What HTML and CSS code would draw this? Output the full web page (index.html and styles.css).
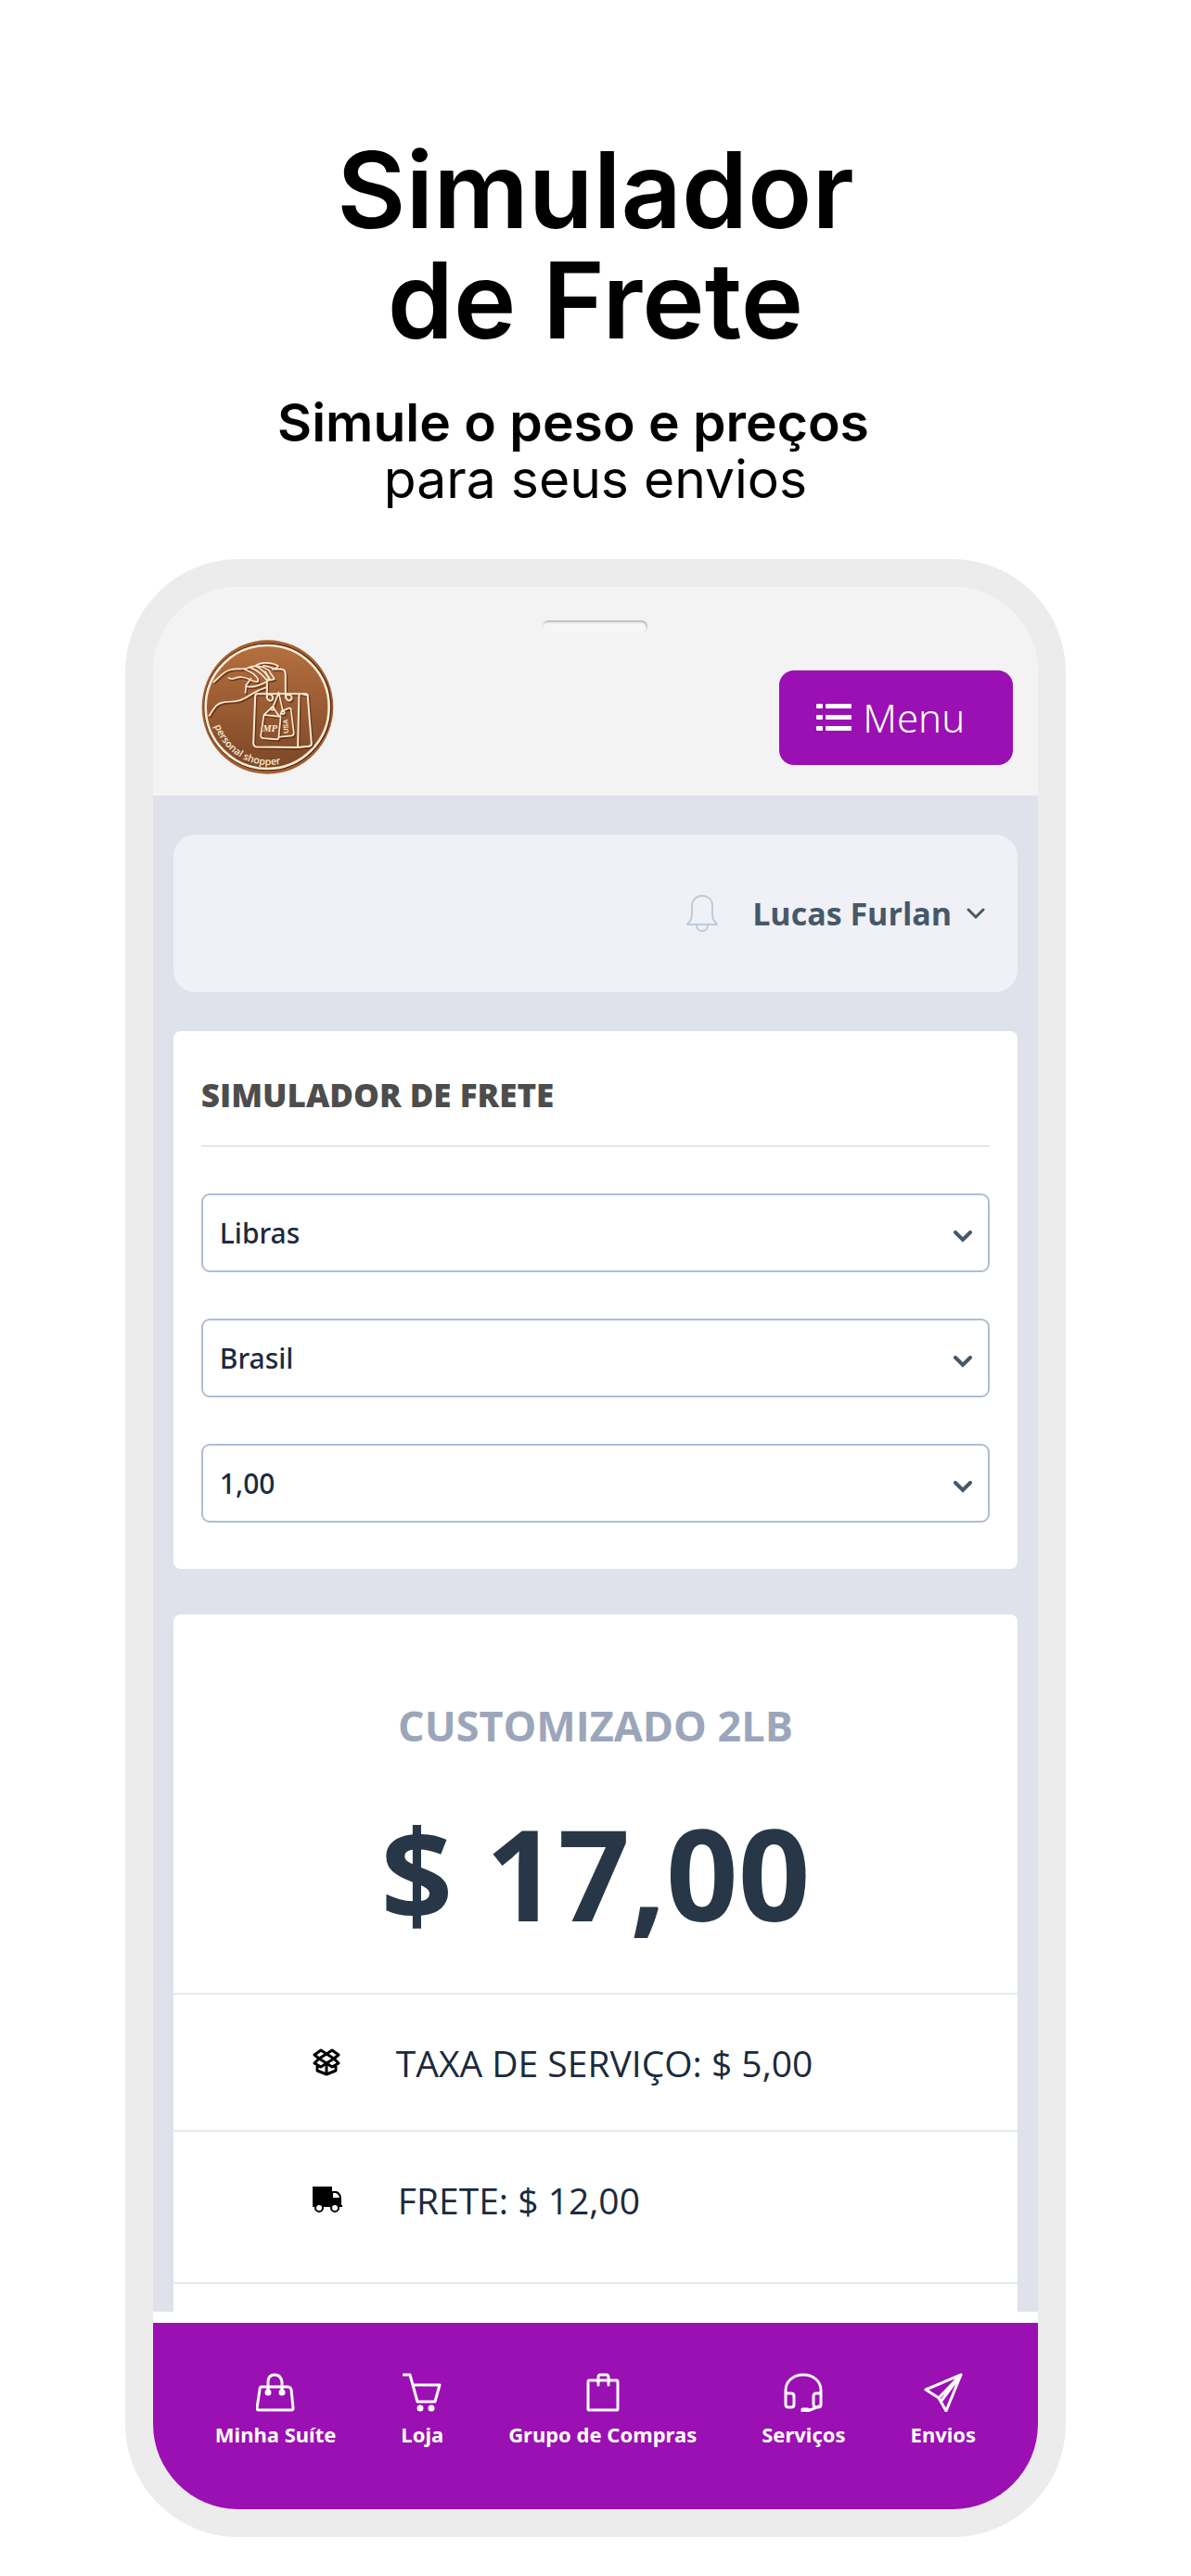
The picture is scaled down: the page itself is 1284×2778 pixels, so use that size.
FILE: index.html
```
<!doctype html>
<html lang="pt-br">
<head>
<title>Simulador de Frete</title>
<meta charset="UTF-8">
<meta name="viewport" content="width=device-width, initial-scale=1">
<link rel="stylesheet" href="styles.css">
</head>
<body>
<header class="intro">
    <h1>Simulador<br>de Frete</h1>
    <p><strong>Simule o peso e preços</strong>para seus envios</p>
</header>

<div class="phone">
    <div class="topbar">
        <div class="speaker"></div>
        <div class="brand">
            <a href="#" class="logo" aria-label="Personal shopper">
                <svg viewBox="52 59 428 436">
                    <defs>
                        <linearGradient id="copper" x1="0" y1="0" x2="0" y2="1">
                            <stop offset="0" stop-color="#b4703f"/>
                            <stop offset="0.5" stop-color="#9a5c34"/>
                            <stop offset="1" stop-color="#7b4726"/>
                        </linearGradient>
                        <path id="arc" d="M94 338 A187 187 0 0 0 340 452"/>
                        <g id="drawing">
                            <path d="M91 196C112 178 124 160 145 156C170 150 190 158 207 148C230 140 252 146 270 158L288 186L276 190L258 162"/>
                            <path d="M207 148C240 158 250 176 264 190L272 190C266 172 246 154 228 144"/>
                            <path d="M228 142C246 128 286 134 300 144L292 154C278 150 268 144 252 143"/>
                            <path d="M140 182C152 194 160 176 184 180C212 184 218 198 234 194C240 188 226 170 202 160L190 154"/>
                            <path d="M212 184L196 206L194 230M198 210C222 216 242 204 262 196M262 213C218 226 212 240 188 250C160 268 120 250 98 274C88 286 84 294 77 305"/>
                            <path stroke-width="6" d="M264 188V238C262 254 276 262 282 252C286 242 278 236 270 236M282 154H302C318 152 324 160 324 172V238C324 254 338 262 344 250C346 240 338 236 330 238"/>
                            <path stroke-width="6" d="M232 234H388Q396 234 396 240L408 392Q410 402 400 404L364 408L230 406Q220 404 220 394L226 242Q226 234 232 234ZM368 236L364 408M382 236L392 238"/>
                            <path d="M282 276L254 302L244 370Q244 376 252 378L296 382Q302 382 302 374L308 312L282 276ZM254 302L308 308M302 230L282 280M302 230L316 292M308 302L312 290L336 280Q342 280 342 286L351 360Q352 368 344 370L304 374"/>
                            <circle cx="282" cy="282" r="5"/><circle cx="316" cy="295" r="5"/>
                        </g>
                    </defs>
                    <ellipse cx="266" cy="277" rx="213" ry="217" fill="#a4602f"/>
                    <circle cx="266" cy="277" r="203" fill="url(#copper)" stroke="#4b240f" stroke-width="8"/>
                    <circle cx="265" cy="277" r="200" fill="none" stroke="#fbe9d3" stroke-width="8"/>
                    <use href="#drawing" x="4" y="5" class="logo-shade"/>
                    <use href="#drawing" class="logo-line"/>
                    <text class="logo-mp" x="250" y="357">MP</text>
                    <text class="logo-usa" transform="translate(334 362) rotate(-94)">USA</text>
                    <text class="logo-name"><textPath href="#arc">personal shopper</textPath></text>
                </svg>
            </a>
            <button type="button" class="menu">
                <svg width="38" height="29" viewBox="0 0 38 29" fill="currentColor"><rect width="7" height="5" rx="1"/><rect x="10" width="28" height="5" rx="1"/><rect y="12" width="7" height="5" rx="1"/><rect x="10" y="12" width="28" height="5" rx="1"/><rect y="24" width="7" height="5" rx="1"/><rect x="10" y="24" width="28" height="5" rx="1"/></svg>
                Menu
            </button>
        </div>
    </div>

    <main>
        <div class="user">
            <button type="button" aria-label="Notificações">
                <svg width="36" height="42" viewBox="0 0 36 42" fill="none" stroke="#bfcbd9" stroke-width="2" stroke-linejoin="round"><path d="M2 33C6 28 7 27 7 21V13C7 6 12 2 18 2S29 6 29 13V21C29 27 30 28 34 33ZM12 34C12 38 15 40 18 40S24 38 24 34"/></svg>
            </button>
            <button type="button" class="name">
                Lucas Furlan
                <svg width="20" height="13" viewBox="0 0 20 13" fill="none" stroke="currentColor" stroke-width="3" stroke-linecap="round"><path d="M2 2L10 10L18 2"/></svg>
            </button>
        </div>

        <form class="card simulator">
            <h2>SIMULADOR DE FRETE</h2>
            <div class="field">
                <select aria-label="Unidade de peso"><option>Libras</option></select>
                <svg width="20" height="13" viewBox="0 0 20 13"><path d="M2 2L10 10L18 2"/></svg>
            </div>
            <div class="field">
                <select aria-label="País"><option>Brasil</option></select>
                <svg width="20" height="13" viewBox="0 0 20 13"><path d="M2 2L10 10L18 2"/></svg>
            </div>
            <div class="field">
                <select aria-label="Peso"><option>1,00</option></select>
                <svg width="20" height="13" viewBox="0 0 20 13"><path d="M2 2L10 10L18 2"/></svg>
            </div>
        </form>

        <section class="card result">
            <h3>CUSTOMIZADO 2LB</h3>
            <div class="price">$ 17,00</div>
            <ul>
                <li>
                    <svg width="30" height="30" viewBox="0 0 30 30" fill="none" stroke="#000" stroke-width="3" stroke-linejoin="round"><path d="M9 2L2 7L7 11L15 6ZM21 2L28 7L23 11L15 6ZM7 11L2 16L9 20L15 16ZM23 11L28 16L21 20L15 16ZM7 11L15 16L23 11M5 19V24L15 28L25 24V19M15 17V28"/></svg>
                    TAXA DE SERVIÇO: $ 5,00
                </li>
                <li class="frete">
                    <svg width="32" height="28" viewBox="0 0 32 28"><path d="M0 0H21V5H26Q31 7 31 13V20H32V22H0Z"/><path fill="#fff" d="M22 7H25Q28 8 29 12H22Z"/><circle cx="7" cy="23" r="4" fill="#fff" stroke="#000" stroke-width="2"/><circle cx="24" cy="23" r="4" fill="#fff" stroke="#000" stroke-width="2"/></svg>
                    FRETE: $ 12,00
                </li>
            </ul>
        </section>
    </main>

    <nav>
        <a href="#">
            <svg viewBox="0 0 42 42"><path d="M6 15H34Q37 15 38 18L40 38Q40 40 38 40H3Q1 40 1 38L4 18Q4 15 6 15ZM13 20V10Q13 2 20 2T28 10V20"/><circle cx="13" cy="21" r="2"/><circle cx="28" cy="21" r="2"/></svg>
            Minha Suíte
        </a>
        <a href="#">
            <svg viewBox="0 0 42 42"><path d="M1 2H8L16 31H35L40 13H12"/><circle cx="19" cy="38" r="2"/><circle cx="31" cy="38" r="2"/></svg>
            Loja
        </a>
        <a href="#">
            <svg viewBox="0 0 42 42"><path d="M6 8H36Q37 8 37 10V39Q37 40 36 40H6Q5 40 5 39V10Q5 8 6 8ZM16 13V5Q16 2 18 2H25Q27 2 27 5V13"/></svg>
            Grupo de Compras
        </a>
        <a href="#">
            <svg viewBox="0 0 42 42"><path d="M2 24V19C2 9 10 2 21 2S40 9 40 19V24M3 22H8Q11 22 11 25V34Q11 37 8 37H5Q2 37 2 34V23ZM40 23V34Q40 37 37 37H35Q32 37 32 34V25Q32 22 35 22H39M38 36L26 41H20V39H26"/></svg>
            Serviços
        </a>
        <a href="#">
            <svg viewBox="0 0 42 42"><path d="M40 2L2 18L16 27L24 41ZM40 2L16 27M36 7L19 30"/></svg>
            Envios
        </a>
    </nav>
</div>
</body>
</html>
```
FILE: styles.css
```
*{box-sizing:border-box;}
body,h1,h2,h3,p,ul{margin:0;padding:0;}
body{background:#fff;color:#1b2b3c;font-family:"Open Sans","Noto Sans",sans-serif;padding:145px 0 42px;}
button,select{font:inherit;color:inherit;background:none;border:0;padding:0;margin:0;cursor:pointer;}
svg{display:block;flex:none;}
a{color:inherit;text-decoration:none;}

/* titulo */
.intro{text-align:center;color:#000;font-family:Inter,"Open Sans",sans-serif;margin-bottom:56px;}
.intro h1{font-size:114px;line-height:119px;font-weight:600;}
.intro p{font-size:57px;line-height:61px;margin-top:42px;}
.intro strong{display:block;font-weight:600;padding-right:48px;}

/* aparelho */
.phone{width:79%;margin:0 auto;border:30px solid #ececec;border-radius:122px;overflow:hidden;background:#fff;}
.topbar{height:225px;background:#f3f3f3;padding-top:36px;}
.speaker{width:113px;height:13px;margin:0 auto;border-radius:6px;background:#f6f6f6;box-shadow:inset -1px 2px 2px #b9bdc0;}
.brand{display:flex;justify-content:space-between;align-items:center;padding:8px 27px 0 52px;}
.logo svg{width:143px;height:145px;}
.logo-shade,.logo-line{fill:none;stroke-width:5;stroke-linecap:round;stroke-linejoin:round;}
.logo-shade{stroke:#54290f;opacity:.7;}
.logo-line{stroke:#fbe9d3;}
.logo-mp,.logo-usa,.logo-name{fill:#fbe9d3;}
.logo-mp{font:italic bold 32px "Liberation Serif",serif;}
.logo-usa{font:bold 22px "Liberation Sans",sans-serif;}
.logo-name{font:600 32px "Open Sans",sans-serif;}
.menu{display:flex;align-items:center;gap:12px;height:102px;padding:0 52px 0 40px;border-radius:16px;background:#9a10b3;color:#fff;font-family:"Noto Sans",sans-serif;font-size:42px;font-weight:300;margin-top:22px;}

main{background:#dfe2ea;padding:42px 22px 0;}
.user{display:flex;justify-content:flex-end;align-items:center;gap:36px;height:170px;padding-right:35px;border-radius:24px;background:#eff1f7;}
.name{display:flex;align-items:center;gap:16px;font-size:34px;font-weight:700;color:#475869;}
.card{background:#fff;border-radius:8px;}
.simulator{margin-top:42px;padding:44px 30px 50px;}
.simulator h2{font-size:35px;line-height:50px;font-weight:800;color:#4d4d4d;padding-bottom:29px;border-bottom:2px solid #e2e8ef;}
.field{position:relative;margin-top:50px;}
.field select{display:block;width:100%;height:85px;padding:0 18px;border:2px solid #b0bdd2;border-radius:9px;appearance:none;font-family:"Noto Sans",sans-serif;font-size:30px;font-weight:500;}
.field svg{position:absolute;right:19px;top:40px;fill:none;stroke:#475869;stroke-width:4;stroke-linecap:round;pointer-events:none;}

.result{margin-top:49px;padding-top:90px;border-radius:8px 8px 0 0;text-align:center;}
.result h3{font-size:45px;line-height:60px;font-weight:700;color:#9ba6ba;}
.price{font-size:136px;line-height:160px;font-weight:700;color:#273747;margin:49px 0;}
.result ul{list-style:none;padding-bottom:30px;}
.result li{display:flex;align-items:center;gap:60px;height:148px;padding-left:150px;border-top:2px solid #e5eaf0;font-size:39px;}
.result li.frete{height:166px;padding-bottom:16px;border-bottom:2px solid #e5eaf0;}

nav{display:flex;justify-content:center;gap:70px;height:201px;margin-top:12px;padding-top:54px;background:#9a10b3;color:#fff;font-family:"Noto Sans",sans-serif;font-size:22px;font-weight:700;}
nav a{display:flex;flex-direction:column;align-items:center;gap:9px;line-height:30px;}
nav svg{width:42px;height:42px;fill:none;stroke:#fff;stroke-width:3;stroke-linejoin:round;stroke-linecap:round;}
nav circle{fill:#fff;}
```
